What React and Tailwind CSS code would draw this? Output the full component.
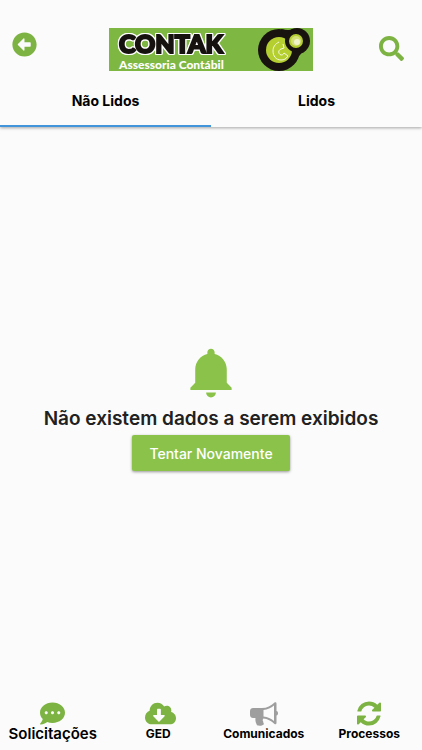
import React, { useState } from 'react';
import {
  FaArrowAltCircleLeft,
  FaCloudDownloadAlt,
  FaCommentDots,
  FaSearch,
} from 'react-icons/fa';
import { IoMdNotifications } from 'react-icons/io';

// Setas de atualização com traço grosso
const RefreshIcon = ({ className }) => (
  <svg viewBox="0 0 1536 1536" fill="currentColor" className={className} aria-hidden="true">
    <path d="M1511 928q0 5-1 7-64 268-268 434.500T764 1536q-146 0-282.500-55T238 1324l-129 129q-19 19-45 19t-45-19-19-45V960q0-26 19-45t45-19h448q26 0 45 19t19 45-19 45l-137 137q71 66 161 102t187 36q134 0 250-65t186-179q11-17 53-117 8-23 30-23h192q13 0 22.500 9.500t9.500 22.500zm25-800v448q0 26-19 45t-45 19h-448q-26 0-45-19t-19-45 19-45l138-138Q969 256 768 256q-134 0-250 65T332 500q-11 17-53 117-8 23-30 23H50q-13 0-22.500-9.500T18 608v-7q65-268 270-434.500T768 0q146 0 284 55.500T1297 212l130-129q19-19 45-19t45 19 19 45z" />
  </svg>
);

const MegaphoneIcon = ({ className }) => (
  <svg viewBox="0 0 28 25" fill="currentColor" className={className} aria-hidden="true">
    <path
      fillRule="evenodd"
      d="M3 7h9c5 0 9-2 12.500-5.500C25 1 26.500 1 26.500 2.500V10c2 .5 2 4 0 4.500V22c0 1.500-1.500 1.500-2 1-3.500-3.500-7-5-11-5.500-1 1-1 2-.3 3 .2 1 0 1.500.8 2.500-1 2-5 2-7 1.300C6 22 5 20 5.500 17H3c-1.500 0-3-1-3-3v-4c0-2 1.500-3 3-3zm10.500 2v6.500c4 .5 7.500 2 10.500 4.500V4.500c-3 2.500-6.500 4-10.500 4.500z"
    />
  </svg>
);

const tabs = ['Não Lidos', 'Lidos'];

const menu = [
  { label: 'Solicitações', Icon: FaCommentDots, iconClass: 'w-[25px] text-[#7cb342]', labelClass: 'text-[15px] font-semibold' },
  { label: 'GED', Icon: FaCloudDownloadAlt, iconClass: 'w-[36px] pl-[5px] text-[#7cb342]', labelClass: 'text-[12px] font-bold' },
  { label: 'Comunicados', Icon: MegaphoneIcon, iconClass: 'w-[28px] text-[#9e9e9e]', labelClass: 'text-[12px] font-bold' },
  { label: 'Processos', Icon: RefreshIcon, iconClass: 'w-[24px] text-[#7cb342]', labelClass: 'text-[12px] font-bold' },
];

const Logo = () => (
  <svg viewBox="0 0 204 43" className="w-[204px] h-[43px] overflow-visible" role="img" aria-label="Contak Assessoria Contábil">
    <rect width="204" height="43" fill="#7fb743" />
    <text
      x="10"
      y="25"
      fontFamily="Lato, sans-serif"
      fontWeight="900"
      fontSize="25"
      fill="#16120f"
      stroke="#16120f"
      strokeWidth="2"
      className="[filter:drop-shadow(1px_0_0_white)_drop-shadow(-1px_0_0_white)_drop-shadow(0_1px_0_white)_drop-shadow(0_-1px_0_white)]"
    >
      CONTAK
    </text>
    <text x="10" y="41" fontFamily="Lato, sans-serif" fontWeight="900" fontSize="12" fill="#ffffff">
      Assessoria Contábil
    </text>
    {/* Símbolo */}
    <circle cx="170" cy="22" r="21" fill="#19130f" />
    <circle cx="188" cy="13" r="13" fill="#19130f" />
    <path d="M172 1q8 2 12 0l11 23q-3 1-4 3l-8 8z" fill="#19130f" />
    <circle cx="170" cy="22" r="13" fill="#b5cf31" />
    <circle cx="187" cy="13" r="11" fill="#19130f" />
    <circle cx="187" cy="13" r="7" fill="#b5cf31" />
    <circle cx="187" cy="13" r="5" fill="#d5e27a" />
    <circle cx="188" cy="14" r="3" fill="#f1f5c9" />
    <path
      d="M170 14c-4 2-6 5-6 9 0 5 3 9 8 9 3 0 5-1 7-4l-4-3c-1 2-2 2-3 2-3-1-3-5 0-6l3-1-1-4"
      fill="none"
      stroke="#f7fadf"
      strokeWidth="1"
      strokeLinejoin="round"
    />
  </svg>
);

const App = () => {
  const [activeTab, setActiveTab] = useState(0);

  return (
    <div className="min-h-screen flex flex-col bg-[#fbfbfb] font-[Inter,sans-serif] text-black">
      <header className="relative z-10 shadow-[0_1px_3px_rgba(0,0,0,0.35)] bg-[#fbfbfb]">
        <div className="flex items-start justify-between pt-7 pl-3 pr-[18px]">
          <button type="button" aria-label="Voltar" className="mt-1 pr-[6px] text-[#7cb342]">
            <FaArrowAltCircleLeft className="size-[25px]" />
          </button>
          <Logo />
          <button type="button" aria-label="Buscar" className="mt-2 text-[#7cb342]">
            <FaSearch className="size-[25px]" />
          </button>
        </div>

        {/* Abas */}
        <div role="tablist" className="flex mt-1">
          {tabs.map((tab, index) => (
            <button
              key={tab}
              type="button"
              role="tab"
              aria-selected={activeTab === index}
              onClick={() => setActiveTab(index)}
              className={`flex-1 h-[52px] border-b-2 text-[14px] font-bold ${
                activeTab === index ? 'border-[#4295db]' : 'border-transparent'
              }`}
            >
              {tab}
            </button>
          ))}
        </div>
      </header>

      {/* Lista vazia */}
      <main className="flex-1 flex flex-col items-center justify-center pb-[14px]">
        <IoMdNotifications className="size-[60px] text-[#8bc34a]" />
        <p className="mt-1 text-[19px] leading-6 font-semibold text-[#212121]">Não existem dados a serem exibidos</p>
        <button
          type="button"
          className="mt-1 h-9 px-[17px] rounded-xs bg-[#8bc34a] text-[14px] font-medium text-white shadow-[0_1px_3px_rgba(0,0,0,0.4)]"
        >
          Tentar Novamente
        </button>
      </main>

      {/* Menu inferior */}
      <nav className="flex pb-2">
        {menu.map(({ label, Icon, iconClass, labelClass }) => (
          <a key={label} href="#" className="flex-1 flex flex-col items-center">
            <Icon className={`h-[25px] ${iconClass}`} />
            <span className={`leading-4 ${labelClass}`}>{label}</span>
          </a>
        ))}
      </nav>
    </div>
  );
};

export default App;
